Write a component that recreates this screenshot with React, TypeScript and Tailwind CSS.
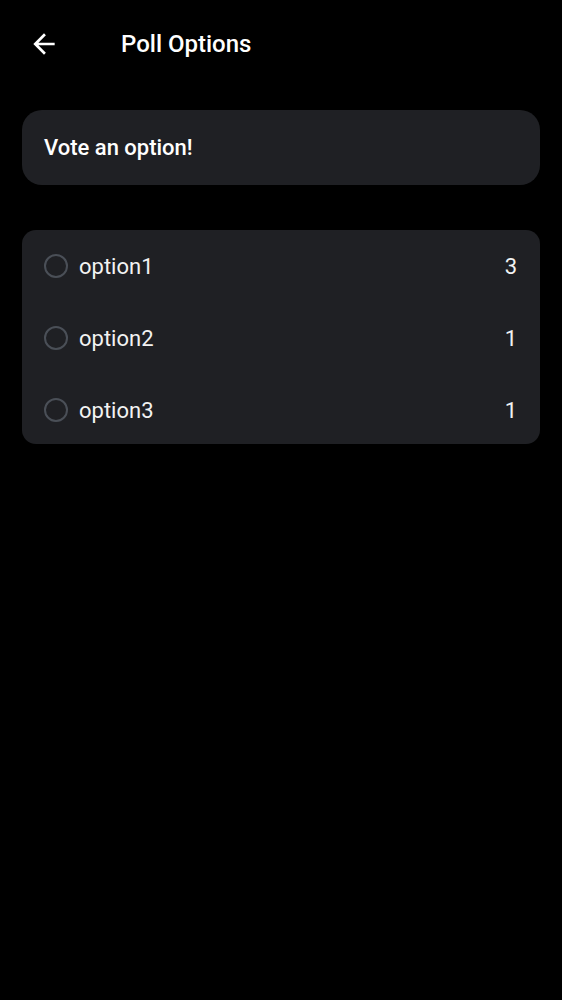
import React from 'react';

const OPTIONS = [
  { label: 'option1', votes: 3 },
  { label: 'option2', votes: 1 },
  { label: 'option3', votes: 1 },
];

function BackArrow() {
  return (
    <svg width="32" height="32" viewBox="0 0 24 24" fill="#ffffff">
      <path d="M20 11H7.83l5.59-5.59L12 4l-8 8 8 8 1.41-1.41L7.83 13H20v-2z" />
    </svg>
  );
}

export default function App() {
  return (
    <div className="min-h-[1000px] w-full bg-black text-white" style={{ fontFamily: 'Roboto, "Noto Sans", sans-serif' }}>
      {/* Header */}
      <div className="flex h-[88px] items-center">
        <div className="ml-[28px] flex h-8 w-8 items-center justify-center">
          <BackArrow />
        </div>
        <div className="ml-[61px] text-[24px] font-medium leading-none">Poll Options</div>
      </div>

      {/* Prompt card */}
      <div className="mx-[22px] mt-[22px] flex h-[75px] items-center rounded-[20px] bg-[#1f2024] px-[22px]">
        <span className="text-[22px] font-medium">Vote an option!</span>
      </div>

      {/* Options list */}
      <div className="mx-[22px] mt-[45px] h-[214px] overflow-hidden rounded-[14px] bg-[#1f2024]">
        {OPTIONS.map((opt) => (
          <div key={opt.label} className="flex h-[72px] items-center px-[22px]">
            <span className="h-[24px] w-[24px] rounded-full border-2 border-[#4a4f57]" />
            <span className="ml-[11px] flex-1 text-[22px] text-[#f2f2f2]">{opt.label}</span>
            <span className="mr-[1px] text-[22px] text-[#f2f2f2]">{opt.votes}</span>
          </div>
        ))}
      </div>
    </div>
  );
}
